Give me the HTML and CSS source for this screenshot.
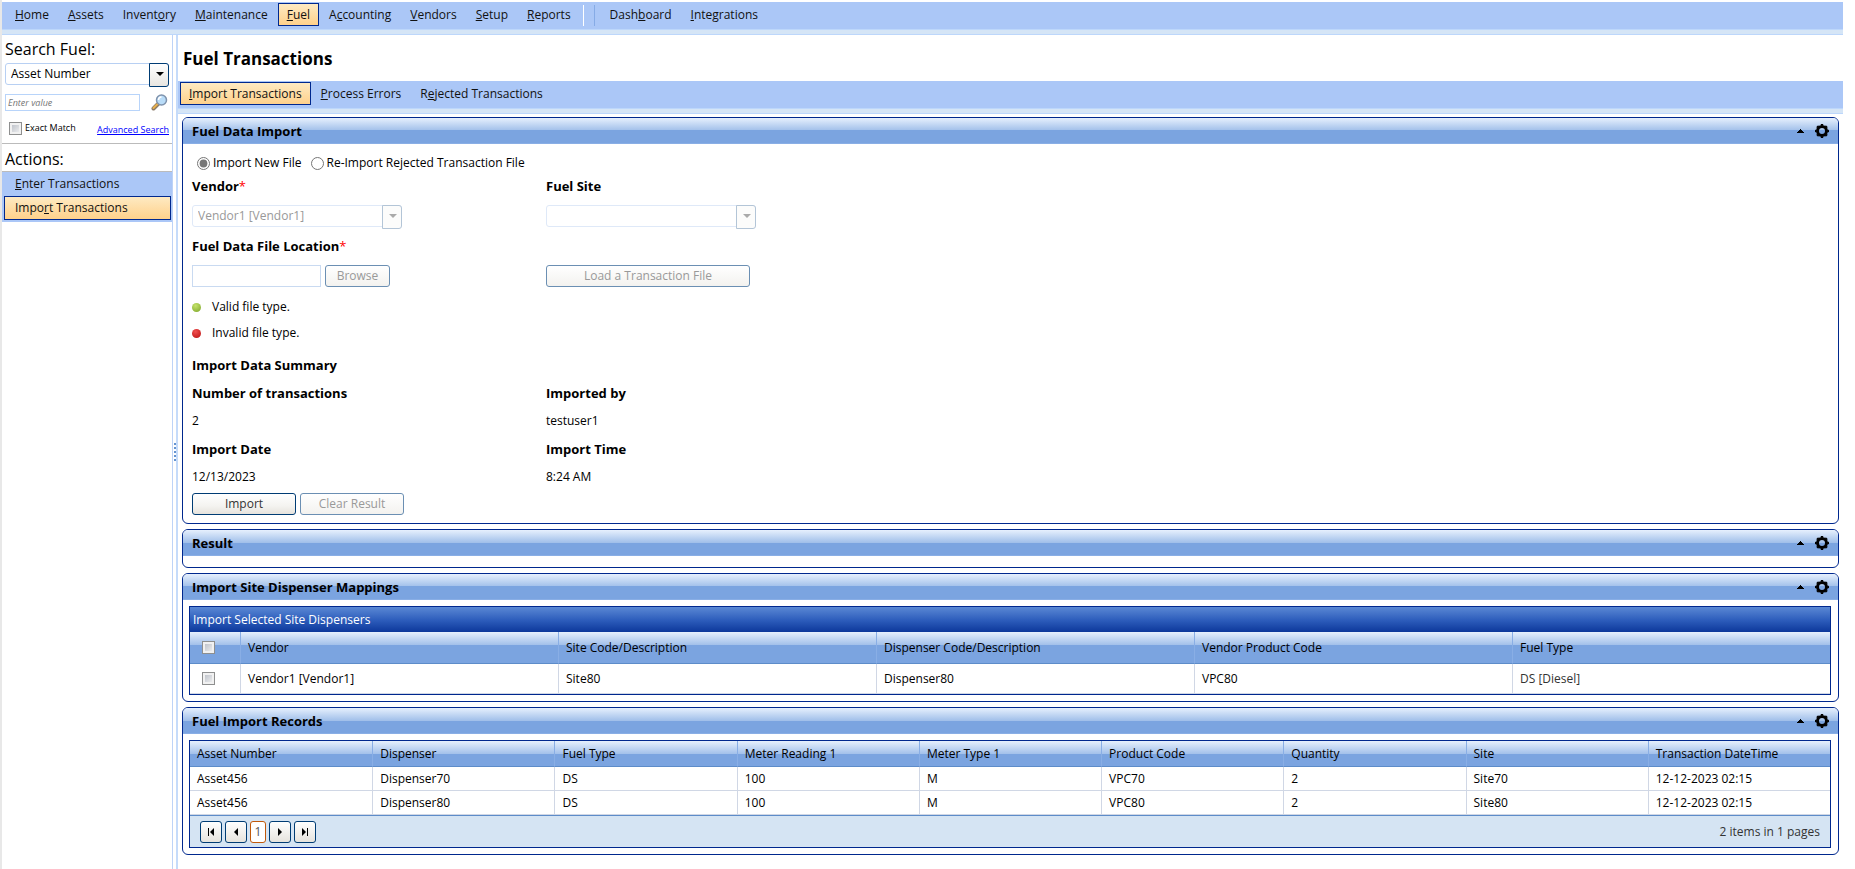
FILE: index.html
```
<!DOCTYPE html>
<html lang="en">
<head>
    <meta charset="UTF-8">
    <meta name="viewport" content="width=device-width, initial-scale=1.0">
    <title>Fuel Transactions</title>
    <link rel="stylesheet" href="styles.css">
</head>
<body>

    <!-- shared icons -->
    <svg class="sprite" aria-hidden="true">
        <symbol id="icon-up" viewBox="0 0 7 4"><path d="M3 0h1v1h1v1h1v1h1v1H0V3h1V2h1V1h1z"/></symbol>
        <symbol id="icon-gear" viewBox="0 0 14 14">
            <circle cx="7" cy="7" r="4.500" fill="none" stroke="#000" stroke-width="3"/>
            <circle cx="7" cy="7" r="6.200" fill="none" stroke="#000" stroke-width="1.600" pathLength="32" stroke-dasharray="2 2" stroke-dashoffset="1"/>
        </symbol>
    </svg>

    <header class="bar">
        <nav class="menu">
            <a href="#"><u>H</u>ome</a>
            <a href="#"><u>A</u>ssets</a>
            <a href="#">Invent<u>o</u>ry</a>
            <a href="#"><u>M</u>aintenance</a>
            <a href="#" class="active"><u>F</u>uel</a>
            <a href="#">A<u>c</u>counting</a>
            <a href="#"><u>V</u>endors</a>
            <a href="#"><u>S</u>etup</a>
            <a href="#"><u>R</u>eports</a>
            <span class="menu-sep"></span>
            <a href="#">Dash<u>b</u>oard</a>
            <a href="#"><u>I</u>ntegrations</a>
        </nav>
    </header>

    <div class="layout">
        <aside class="sidebar">
            <h2>Search Fuel:</h2>
            <form class="search">
                <div class="select">
                    <select aria-label="Search by">
                        <option>Asset Number</option>
                    </select>
                </div>
                <div class="search-row">
                    <input type="text" class="search-input" placeholder="Enter value" aria-label="Search value">
                    <button type="button" class="search-btn" aria-label="Search">
                        <svg width="17" height="17" viewBox="0 0 17 17">
                            <path d="M2.500 14.500L7 10" stroke="#8a7a68" stroke-width="4" stroke-linecap="round"/>
                            <path d="M2.500 14L6.500 10" stroke="#e8b04c" stroke-width="2" stroke-linecap="round"/>
                            <circle cx="10.500" cy="6" r="5" fill="#b9dcf8" stroke="#7f93ad" stroke-width="1.500"/>
                            <path d="M7.500 6a3 3 0 0 1 3-3" stroke="#fff" stroke-width="1.500" fill="none"/>
                        </svg>
                    </button>
                </div>
                <div class="search-options">
                    <input type="checkbox" id="exact-match">
                    <label for="exact-match">Exact Match</label>
                    <a href="#">Advanced Search</a>
                </div>
            </form>
            <h2 class="actions-title">Actions:</h2>
            <nav class="side-menu">
                <a href="#"><u>E</u>nter Transactions</a>
                <a href="#" class="active">Impo<u>r</u>t Transactions</a>
            </nav>
        </aside>

        <div class="splitter">
            <span class="grip"></span>
        </div>

        <main class="content">
            <h1>Fuel Transactions</h1>
            <div class="bar">
                <nav class="menu">
                    <a href="#" class="active"><u>I</u>mport Transactions</a>
                    <a href="#"><u>P</u>rocess Errors</a>
                    <a href="#">R<u>e</u>jected Transactions</a>
                </nav>
            </div>

            <section class="panel">
                <div class="panel-header">
                    <h3>Fuel Data Import</h3>
                    <button type="button" aria-label="Collapse"><svg width="7" height="4"><use href="#icon-up"/></svg></button>
                    <button type="button" aria-label="Settings"><svg width="14" height="14"><use href="#icon-gear"/></svg></button>
                </div>
                <form class="import-form">
                    <div class="radios">
                        <input type="radio" name="mode" id="mode-new" checked>
                        <label for="mode-new">Import New File</label>
                        <input type="radio" name="mode" id="mode-again">
                        <label for="mode-again">Re-Import Rejected Transaction File</label>
                    </div>

                    <div class="fields">
                        <div class="field">
                            <label for="vendor">Vendor<span class="required">*</span></label>
                            <div class="select disabled">
                                <select id="vendor" disabled>
                                    <option>Vendor1 [Vendor1]</option>
                                </select>
                            </div>
                        </div>
                        <div class="field">
                            <label for="fuel-site">Fuel Site</label>
                            <div class="select disabled">
                                <select id="fuel-site" disabled>
                                    <option></option>
                                </select>
                            </div>
                        </div>
                        <div class="field">
                            <label for="file-location">Fuel Data File Location<span class="required">*</span></label>
                            <div class="file-row">
                                <input type="text" id="file-location" disabled>
                                <button type="button" class="btn btn-small" disabled>Browse</button>
                            </div>
                        </div>
                        <div class="field field-end">
                            <button type="button" class="btn btn-wide" disabled>Load a Transaction File</button>
                        </div>
                    </div>

                    <ul class="legend">
                        <li class="valid">Valid file type.</li>
                        <li class="invalid">Invalid file type.</li>
                    </ul>

                    <h4>Import Data Summary</h4>
                    <dl class="summary">
                        <div><dt>Number of transactions</dt><dd>2</dd></div>
                        <div><dt>Imported by</dt><dd>testuser1</dd></div>
                        <div><dt>Import Date</dt><dd>12/13/2023</dd></div>
                        <div><dt>Import Time</dt><dd>8:24 AM</dd></div>
                    </dl>

                    <div class="buttons">
                        <button type="button" class="btn">Import</button>
                        <button type="button" class="btn" disabled>Clear Result</button>
                    </div>
                </form>
            </section>

            <section class="panel">
                <div class="panel-header">
                    <h3>Result</h3>
                    <button type="button" aria-label="Collapse"><svg width="7" height="4"><use href="#icon-up"/></svg></button>
                    <button type="button" aria-label="Settings"><svg width="14" height="14"><use href="#icon-gear"/></svg></button>
                </div>
                <div class="panel-empty"></div>
            </section>

            <section class="panel">
                <div class="panel-header">
                    <h3>Import Site Dispenser Mappings</h3>
                    <button type="button" aria-label="Collapse"><svg width="7" height="4"><use href="#icon-up"/></svg></button>
                    <button type="button" aria-label="Settings"><svg width="14" height="14"><use href="#icon-gear"/></svg></button>
                </div>
                <div class="grid">
                    <table class="mappings">
                        <caption>Import Selected Site Dispensers</caption>
                        <thead>
                            <tr>
                                <th class="check"><input type="checkbox" aria-label="Select all"></th>
                                <th>Vendor</th>
                                <th>Site Code/Description</th>
                                <th>Dispenser Code/Description</th>
                                <th>Vendor Product Code</th>
                                <th>Fuel Type</th>
                            </tr>
                        </thead>
                        <tbody>
                            <tr>
                                <td class="check"><input type="checkbox" aria-label="Select Vendor1"></td>
                                <td>Vendor1 [Vendor1]</td>
                                <td>Site80</td>
                                <td>Dispenser80</td>
                                <td>VPC80</td>
                                <td class="muted">DS [Diesel]</td>
                            </tr>
                        </tbody>
                    </table>
                </div>
            </section>

            <section class="panel">
                <div class="panel-header">
                    <h3>Fuel Import Records</h3>
                    <button type="button" aria-label="Collapse"><svg width="7" height="4"><use href="#icon-up"/></svg></button>
                    <button type="button" aria-label="Settings"><svg width="14" height="14"><use href="#icon-gear"/></svg></button>
                </div>
                <div class="grid">
                    <table class="records">
                        <thead>
                            <tr>
                                <th>Asset Number</th>
                                <th>Dispenser</th>
                                <th>Fuel Type</th>
                                <th>Meter Reading 1</th>
                                <th>Meter Type 1</th>
                                <th>Product Code</th>
                                <th>Quantity</th>
                                <th>Site</th>
                                <th>Transaction DateTime</th>
                            </tr>
                        </thead>
                        <tbody>
                            <tr>
                                <td>Asset456</td>
                                <td>Dispenser70</td>
                                <td>DS</td>
                                <td>100</td>
                                <td>M</td>
                                <td>VPC70</td>
                                <td>2</td>
                                <td>Site70</td>
                                <td>12-12-2023 02:15</td>
                            </tr>
                            <tr>
                                <td>Asset456</td>
                                <td>Dispenser80</td>
                                <td>DS</td>
                                <td>100</td>
                                <td>M</td>
                                <td>VPC80</td>
                                <td>2</td>
                                <td>Site80</td>
                                <td>12-12-2023 02:15</td>
                            </tr>
                        </tbody>
                    </table>
                    <div class="pager">
                        <button type="button" aria-label="First page"><svg width="6" height="8"><path d="M0 0h1v8H0zM6 0v8L2 4z"/></svg></button>
                        <button type="button" aria-label="Previous page"><svg width="4" height="8"><path d="M4 0v8L0 4z"/></svg></button>
                        <button type="button" class="current">1</button>
                        <button type="button" aria-label="Next page"><svg width="4" height="8"><path d="M0 0v8l4-4z"/></svg></button>
                        <button type="button" aria-label="Last page"><svg width="6" height="8"><path d="M5 0h1v8H5zM0 0v8l4-4z"/></svg></button>
                        <span class="pager-info">2 items in 1 pages</span>
                    </div>
                </div>
            </section>
        </main>
    </div>

</body>
</html>
```
FILE: styles.css
```
* {
    box-sizing: border-box;
}
body {
    margin: 0;
    padding: 2px 12px 0 0;
    min-height: 100vh;
    display: flex;
    flex-direction: column;
    border-left: 2px solid #e8e8e8;
    font-family: "Segoe UI", "Open Sans", "Noto Sans", sans-serif;
    font-size: 12px;
    line-height: 16px;
    color: #000;
    background: #fff;
}
h1, h2, h3, h4, ul, dl, dd {
    margin: 0;
    padding: 0;
}
button, input, select {
    font: inherit;
    margin: 0;
}
.sprite {
    display: none;
}

/* menu bars */
.bar {
    background: #d5e5f6;
    border-bottom: 1px solid #bdd7fb;
}
.menu {
    display: flex;
    gap: 1px;
    height: 28px;
    padding: 1px 4px 3px;
    margin-bottom: 4px;
    background: #abc7f7;
    border-bottom: 1px solid #bdd7fb;
}
.content .menu {
    padding-left: 2px;
}
.menu a {
    padding: 3px 8px;
    border: 1px solid transparent;
    color: #111;
    text-decoration: none;
}
.menu .active, .side-menu .active {
    border-color: #00288e;
    background: linear-gradient(#feeac2, #ffd18b);
}
.menu-sep {
    width: 12px;
    margin: 2px 5px 0 2px;
    border-left: 1px solid #fff;
    border-right: 1px solid #86abe6;
}

.layout {
    display: flex;
    flex: 1;
}

/* sidebar */
.sidebar {
    width: 171px;
    border-right: 1px solid #bdd3f7;
}
.sidebar h2 {
    padding: 3px;
    font-size: 16px;
    line-height: 22px;
    font-weight: normal;
}
.search {
    padding: 0 3px 5px;
    border-bottom: 1px solid #bbb;
}
.select {
    position: relative;
    height: 22px;
}
.select select {
    width: 100%;
    height: 22px;
    padding: 0 22px 0 5px;
    appearance: none;
    border: 1px solid #b8d0f3;
    border-radius: 3px;
    background: #fff;
    color: #000;
}
/* arrow box on the right end of the drop-down */
.select::before {
    content: "";
    position: absolute;
    top: 0;
    right: 0;
    width: 18px;
    height: 22px;
    border: 1px solid #003c74;
    border-radius: 0 3px 3px 0;
    background: linear-gradient(#fff, #e8e6e1);
    pointer-events: none;
}
.select::after {
    content: "";
    position: absolute;
    top: 9px;
    right: 5px;
    border: 4px solid transparent;
    border-top-color: #000;
    border-bottom: 0;
    pointer-events: none;
}
.select.disabled select {
    border-color: #dfe9f8;
    color: #999;
    opacity: 1;
}
.select.disabled::before {
    border-color: #b3c5d7;
    background: #fcfcfb;
}
.select.disabled::after {
    border-top-color: #aaa;
}
.search-row {
    display: flex;
    justify-content: space-between;
    align-items: center;
    margin-top: 9px;
    padding-right: 1px;
}
.search-input {
    width: 135px;
    height: 17px;
    padding: 0 2px;
    border: 1px solid #b8d4fa;
    font-size: 9px;
    font-style: italic;
}
.search-btn {
    padding: 0;
    border: 0;
    background: none;
    line-height: 0;
}
.search-options {
    display: flex;
    align-items: center;
    margin-top: 7px;
    padding-left: 4px;
    font-size: 9px;
}
.search-options label {
    margin-left: 3px;
}
.search-options a {
    margin-left: auto;
    padding-top: 4px;
    color: #00f;
}
.sidebar .actions-title {
    padding: 4px 3px 1px;
    border-bottom: 1px solid #bbb;
}
.side-menu {
    padding: 0 1px 2px 2px;
    background: #abc7f7;
}
.side-menu a {
    display: block;
    height: 24px;
    padding: 3px 10px;
    border: 1px solid transparent;
    color: #111;
    text-decoration: none;
}

input[type="checkbox"] {
    width: 13px;
    height: 13px;
    appearance: none;
    border: 1px solid #8e8f8f;
    background: linear-gradient(135deg, #b4b9c2, #f6f6f6);
    box-shadow: inset 0 0 0 2px #f1f1f1;
}

.splitter {
    display: flex;
    align-items: center;
    justify-content: flex-end;
    width: 5px;
    background: #fff;
    border-right: 2px solid #c5dbfa;
}
.grip {
    width: 2px;
    height: 18px;
    background: repeating-linear-gradient(#6593cf 0 2px, transparent 2px 4px);
}

/* main area */
.content {
    flex: 1;
    min-width: 0;
}
.content h1 {
    padding: 12px 5px 10px;
    font-size: 17px;
    line-height: 24px;
}
.panel {
    margin: 3px 4px 5px;
    overflow: hidden;
    border: 1px solid #00288e;
    border-radius: 6px;
}
.panel + .panel {
    margin-top: 0;
}
.panel-header {
    display: flex;
    align-items: center;
    height: 26px;
    padding: 0 9px;
    background: linear-gradient(#e6f0fd, #a2c0ea 50%, #7ba4e0 50%);
    border-bottom: 1px solid #89aee5;
}
.panel-header h3 {
    flex: 1;
    font-size: 13px;
}
.panel-header button {
    display: flex;
    margin-left: 11px;
    padding: 0;
    border: 0;
    background: none;
}
.panel-empty {
    height: 11px;
}

.import-form {
    padding: 9px 9px 8px;
}
.radios {
    display: flex;
    align-items: center;
    height: 20px;
}
.radios input {
    width: 13px;
    height: 13px;
    margin: 0 3px 0 5px;
    accent-color: #767676;
}
.radios label {
    margin-right: 4px;
}
.fields, .summary {
    display: grid;
    grid-template-columns: 354px 354px;
}
.field {
    height: 60px;
}
.field > label {
    display: block;
    padding: 5px 0 11px;
    font-size: 13px;
    font-weight: bold;
}
.required {
    color: #f00;
    font-weight: normal;
}
.field .select {
    width: 210px;
}
.field-end {
    padding-top: 32px;
}
.file-row, .buttons {
    display: flex;
    gap: 4px;
}
.file-row input {
    width: 129px;
    height: 22px;
    border: 1px solid #c9daf1;
    background: #fff;
}
.btn {
    width: 104px;
    height: 22px;
    padding: 0;
    border: 1px solid #003c74;
    border-radius: 3px;
    background: linear-gradient(#fff, #f4f3f0 60%, #e6e3dd);
    color: #333;
}
.btn:disabled {
    border-color: #6b8fb3;
    background: linear-gradient(#fff, #f3f2ef);
    color: #999;
}
.btn-small {
    width: 65px;
}
.btn-wide {
    width: 204px;
}
.legend {
    list-style: none;
    padding-top: 1px;
}
.legend li {
    display: flex;
    align-items: center;
    gap: 11px;
    height: 26px;
}
.legend li::before {
    content: "";
    width: 9px;
    height: 9px;
    border-radius: 50%;
    background: radial-gradient(circle at 40% 30%, #c5e36b, #7ba428);
}
.legend .invalid::before {
    background: radial-gradient(circle at 40% 30%, #f05050, #b80f0f);
}
.import-form h4, .summary dt, .summary dd {
    padding: 6px 0;
    font-size: 13px;
    font-weight: bold;
}
.import-form h4 {
    padding-top: 11px;
}
.summary dd {
    font-size: 12px;
    font-weight: normal;
}
.buttons {
    padding-top: 2px;
}

/* tables */
.grid {
    margin: 6px 7px 6px 6px;
    border: 1px solid #00288e;
}
.grid table {
    width: 100%;
    border-collapse: separate;
    border-spacing: 0;
    table-layout: fixed;
}
.grid caption {
    height: 25px;
    padding: 5px 3px 4px;
    color: #fff;
    text-align: left;
    background: linear-gradient(#5a88d4, #2f5fbd 50%, #0d389b);
}
.grid th {
    height: 26px;
    padding: 0 7px;
    border-left: 1px solid #89aee5;
    border-bottom: 1px solid #5d8cc9;
    background: linear-gradient(#e6f0fd, #a2c0ea 13px, #7ba4e0 13px);
    font-weight: normal;
    text-align: left;
}
.grid td {
    height: 24px;
    padding: 0 7px;
    border-left: 1px solid #d0d7e5;
    border-bottom: 1px solid #d0d7e5;
}
.grid th:first-child, .grid td:first-child {
    border-left: 0;
}
.mappings th {
    height: 32px;
}
.mappings td {
    height: 30px;
}
.grid .check {
    width: 50px;
    padding: 0 12px;
    line-height: 0;
}
.grid .muted {
    color: #333;
}
.pager {
    display: flex;
    align-items: center;
    gap: 3px;
    height: 32px;
    padding: 0 10px;
    border-top: 1px solid #5d8cc9;
    background: #d5e4f3;
}
.pager button {
    display: flex;
    align-items: center;
    justify-content: center;
    width: 22px;
    height: 22px;
    padding: 0;
    border: 1px solid #003c74;
    border-radius: 3px;
    background: linear-gradient(#fff, #e6e3dd);
}
.pager .current {
    width: 16px;
    border-color: #c1590b;
    background: #fff;
    color: #555;
}
.pager-info {
    margin-left: auto;
    color: #333;
}
```
